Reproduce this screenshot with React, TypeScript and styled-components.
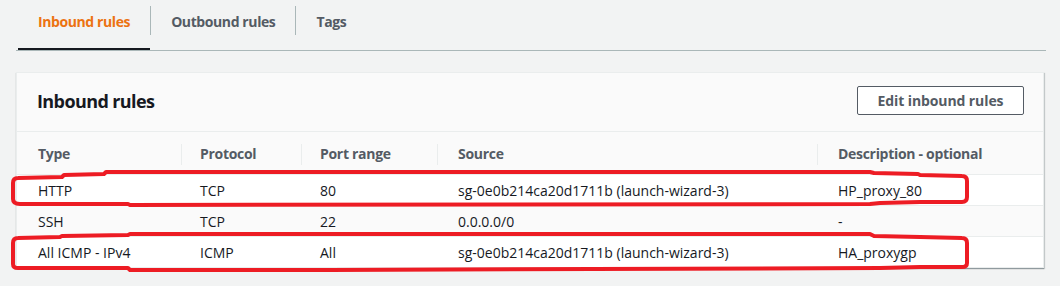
import React from 'react';
import styled, { createGlobalStyle } from 'styled-components';

// --- Global page reset ---

const GlobalStyle = createGlobalStyle`
  html, body {
    margin: 0;
    padding: 0;
    background: #f2f3f3;
  }
  body {
    font-family: 'Open Sans', 'Liberation Sans', sans-serif;
    color: #16191f;
    -webkit-font-smoothing: antialiased;
  }
`;

// --- Layout ---

const Page = styled.div`
  position: relative;
  width: 1060px;
  height: 286px;
  padding: 0 16px;
  box-sizing: border-box;
  overflow: hidden;
`;

const TabList = styled.div`
  display: flex;
  align-items: flex-start;
  padding-left: 2px;
  border-bottom: 1px solid #aab7b8;
  width: 1028px;
`;

const Tab = styled.div<{ active?: boolean }>`
  padding: 13px 20px 17px;
  line-height: 18px;
  font-size: 14px;
  font-weight: 700;
  letter-spacing: -0.4px;
  color: ${({ active }) => (active ? '#ec7211' : '#545b64')};
  border-bottom: 2px solid ${({ active }) => (active ? '#16191f' : 'transparent')};
  white-space: nowrap;
`;

const TabDivider = styled.div`
  width: 1px;
  height: 29px;
  margin-top: 6px;
  background: #aab7b8;
`;

const Card = styled.section`
  margin-top: 21px;
  width: 1028px;
  background: #fff;
  border: 1px solid #eaeded;
  border-bottom: none;
  box-shadow: 0 1px 1px 0 rgba(0, 28, 36, 0.3), 1px 1px 1px 0 rgba(0, 28, 36, 0.15);
  box-sizing: border-box;
`;

const CardHeader = styled.div`
  display: flex;
  align-items: center;
  justify-content: space-between;
  padding: 13px 19px 16px 20px;
  background: #fafafa;
  border-bottom: 1px solid #eaeded;
`;

const Title = styled.h2`
  margin: 0;
  font-size: 18px;
  font-weight: 700;
  letter-spacing: -0.6px;
  line-height: 22px;
  color: #16191f;
`;

const Button = styled.button`
  height: 29px;
  width: 167px;
  padding: 0;
  background: #fff;
  border: 1px solid #545b64;
  border-radius: 2px;
  font-family: inherit;
  font-size: 14px;
  font-weight: 700;
  letter-spacing: -0.1px;
  color: #545b64;
`;

const Table = styled.table`
  width: 100%;
  border-collapse: collapse;
  table-layout: fixed;
  font-size: 14px;
`;

const Th = styled.th<{ pad: number; divider?: boolean }>`
  height: 42px;
  padding: 0 0 0 ${({ pad }) => pad}px;
  text-align: left;
  font-weight: 700;
  letter-spacing: -0.3px;
  color: #545b64;
  background-color: #fafafa;
  border-bottom: 1px solid #eaeded;
  background-image: ${({ divider }) =>
    divider ? 'linear-gradient(#eaeded, #eaeded)' : 'none'};
  background-size: 1px 21px;
  background-position: 0 12px;
  background-repeat: no-repeat;
`;

const Row = styled.tr<{ striped?: boolean }>`
  background: ${({ striped }) => (striped ? '#fafafa' : '#fff')};
`;

const Td = styled.td<{ pad: number }>`
  height: 29px;
  padding: 1px 0 0 ${({ pad }) => pad}px;
  color: #16191f;
  border-bottom: 1px solid #eaeded;
  white-space: nowrap;
`;

const Annotations = styled.svg`
  position: absolute;
  left: 0;
  top: 0;
  pointer-events: none;
`;

const columns = [
  { name: 'Type', width: 164, pad: 21 },
  { name: 'Protocol', width: 120, pad: 19 },
  { name: 'Port range', width: 136, pad: 19 },
  { name: 'Source', width: 380, pad: 21 },
  { name: 'Description - optional', width: 226, pad: 21 },
];

const rules = [
  ['HTTP', 'TCP', '80', 'sg-0e0b214ca20d1711b (launch-wizard-3)', 'HP_proxy_80'],
  ['SSH', 'TCP', '22', '0.0.0.0/0', '-'],
  ['All ICMP - IPv4', 'ICMP', 'All', 'sg-0e0b214ca20d1711b (launch-wizard-3)', 'HA_proxygp'],
];

export default function App() {
  return (
    <>
      <GlobalStyle />
      <Page>
        <TabList>
          <Tab active>Inbound rules</Tab>
          <TabDivider />
          <Tab>Outbound rules</Tab>
          <TabDivider />
          <Tab>Tags</Tab>
        </TabList>

        <Card>
          <CardHeader>
            <Title>Inbound rules</Title>
            <Button>Edit inbound rules</Button>
          </CardHeader>
          <Table>
            <colgroup>
              {columns.map((c) => (
                <col key={c.name} style={{ width: c.width }} />
              ))}
            </colgroup>
            <thead>
              <tr>
                {columns.map((c, i) => (
                  <Th key={c.name} pad={c.pad} divider={i > 0}>
                    {c.name}
                  </Th>
                ))}
              </tr>
            </thead>
            <tbody>
              {rules.map((r, ri) => (
                <Row key={ri} striped={ri % 2 === 1}>
                  {r.map((cell, ci) => (
                    <Td key={ci} pad={columns[ci].pad}>
                      {cell}
                    </Td>
                  ))}
                </Row>
              ))}
            </tbody>
          </Table>
        </Card>

        {/* hand-drawn red marks around the highlighted rules */}
        <Annotations width="1060" height="286" viewBox="0 0 1060 286">
          <g fill="none" stroke="#ed1c24" strokeWidth="4" strokeLinejoin="round">
            <path d="M18 178 L62 177 L64 175 L104 174 L106 172 L870 172 L874 173 L918 174 L920 175 L962 176 Q967 176 967 181 L967 197 Q967 202 962 202 L920 202 L880 203 L870 204 L130 205 L128 204 L20 204 Q13 204 13 199 L13 183 Q13 178 18 178 Z" />
            <path d="M18 238 L60 237 L62 236 L128 235 L130 234 L870 234 L874 236 L920 237 L962 238 Q967 238 967 243 L967 263 Q967 267 962 267 L920 267 L880 268 L330 270 L130 270 L128 268 L18 268 Q13 268 13 264 L13 243 Q13 238 18 238 Z" />
          </g>
        </Annotations>
      </Page>
    </>
  );
}
